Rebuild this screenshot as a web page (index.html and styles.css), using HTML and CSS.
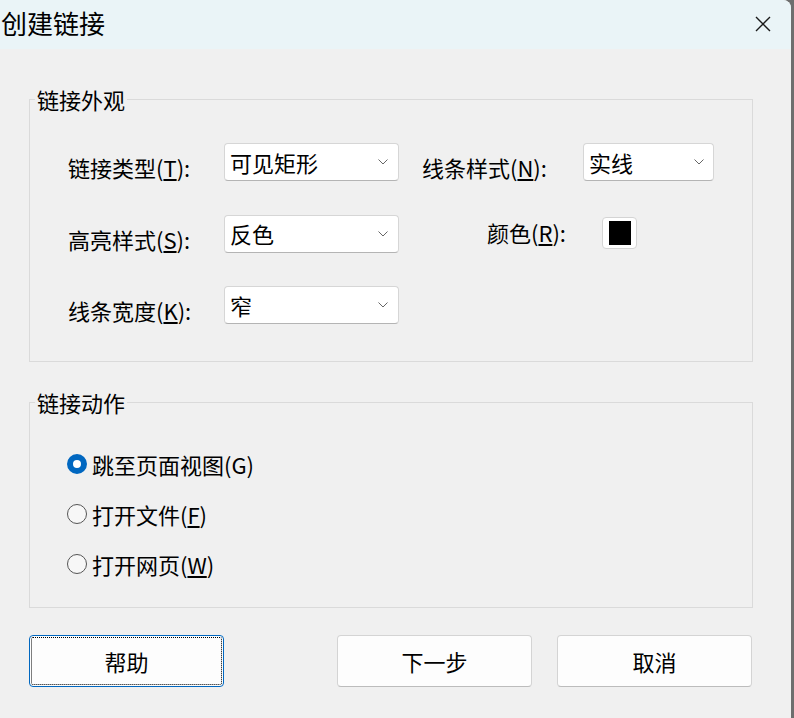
FILE: index.html
```html
<!DOCTYPE html>
<html lang="zh-CN">
<head>
    <meta charset="UTF-8">
    <title>创建链接</title>
    <link rel="stylesheet" href="styles.css">
</head>
<body>
    <div class="window">
        <div class="titlebar">
            <span class="title">创建链接</span>
            <svg class="close" width="16" height="16" viewBox="0 0 16 16">
                <path d="M1 1 L15 15 M15 1 L1 15" stroke="#1a1a1a" stroke-width="1.4" fill="none"/>
            </svg>
        </div>

        <fieldset class="group look">
            <legend>链接外观</legend>
            <div class="look-grid">
                <div class="label">链接类型(<u>T</u>):</div>
                <div class="select">
                    <span>可见矩形</span>
                    <svg width="10" height="6" viewBox="0 0 10 6"><path d="M0.5 0.5 L5 5 L9.5 0.5" stroke="#666" fill="none"/></svg>
                </div>
                <div class="label label-mid">线条样式(<u>N</u>):</div>
                <div class="select select-small">
                    <span>实线</span>
                    <svg width="10" height="6" viewBox="0 0 10 6"><path d="M0.5 0.5 L5 5 L9.5 0.5" stroke="#666" fill="none"/></svg>
                </div>

                <div class="label">高亮样式(<u>S</u>):</div>
                <div class="select">
                    <span>反色</span>
                    <svg width="10" height="6" viewBox="0 0 10 6"><path d="M0.5 0.5 L5 5 L9.5 0.5" stroke="#666" fill="none"/></svg>
                </div>
                <div class="label label-color">颜色(<u>R</u>):</div>
                <div class="swatch"><div class="swatch-fill"></div></div>

                <div class="label">线条宽度(<u>K</u>):</div>
                <div class="select">
                    <span>窄</span>
                    <svg width="10" height="6" viewBox="0 0 10 6"><path d="M0.5 0.5 L5 5 L9.5 0.5" stroke="#666" fill="none"/></svg>
                </div>
            </div>
        </fieldset>

        <fieldset class="group action">
            <legend>链接动作</legend>
            <div class="radios">
                <div class="radio-row"><span class="radio checked"></span>跳至页面视图(G)</div>
                <div class="radio-row"><span class="radio"></span>打开文件(<u>F</u>)</div>
                <div class="radio-row"><span class="radio"></span>打开网页(<u>W</u>)</div>
            </div>
        </fieldset>

        <div class="buttons">
            <div class="btn btn-help focused">帮助</div>
            <div class="btn btn-next">下一步</div>
            <div class="btn btn-cancel">取消</div>
        </div>
    </div>
</body>
</html>
```

FILE: styles.css
```css
body {
    margin: 0;
    background: #6e6e6e;
    font-family: "Noto Sans CJK SC", "Microsoft YaHei", sans-serif;
    color: #000;
    overflow: hidden;
}

.window {
    width: 791px;
    height: 718px;
    background: #f0f0f0;
    border-top-right-radius: 8px;
    overflow: hidden;
}

.titlebar {
    height: 49px;
    background: #eaf4f7;
    display: flex;
    align-items: center;
    justify-content: space-between;
}

.title {
    font-size: 26px;
    line-height: 34px;
    margin-left: 1px;
    margin-top: -4px;
}

.close {
    margin-right: 20px;
    margin-top: -2px;
}

.group {
    box-sizing: border-box;
    width: 724px;
    margin: 0 0 0 29px;
    padding: 0;
    border: 1px solid #dadada;
    min-width: 0;
}

.group legend {
    font-size: 22px;
    line-height: 28px;
    padding: 0 2px;
    margin-left: 5px;
}

.look {
    margin-top: 36px;
}

.action {
    margin-top: 26px;
}

.look-grid {
    display: grid;
    grid-template-columns: 156px 175px 184px 131px;
    grid-auto-rows: 38px;
    row-gap: 33.5px;
    padding: 30px 0 37px 38px;
}

.label {
    font-size: 22px;
    line-height: 28px;
    padding-top: 10px;
    white-space: nowrap;
}

.label-mid {
    padding-left: 23px;
}

.label-color {
    padding-top: 3px;
    padding-right: 17px;
    text-align: right;
}

.select {
    box-sizing: border-box;
    height: 38px;
    background: #fff;
    border: 1px solid #d6d6d6;
    border-bottom-color: #b4b4b4;
    border-radius: 4px;
    display: flex;
    align-items: center;
    justify-content: space-between;
    padding: 0 10px 0 5px;
    font-size: 22px;
    line-height: 28px;
}

.select span {
    margin-top: -1px;
}

.select-small {
    padding-right: 9px;
}

.swatch {
    box-sizing: border-box;
    width: 35px;
    height: 32px;
    margin: 2px 0 0 19px;
    background: #fff;
    border: 1px solid #d4d4d4;
    border-radius: 4px;
    padding: 3px 5px 3px 6px;
}

.swatch-fill {
    width: 100%;
    height: 100%;
    background: #000;
}

.radios {
    padding: 23px 0 18px 37px;
}

.radio-row {
    height: 50px;
    display: flex;
    align-items: center;
    font-size: 22px;
    line-height: 28px;
}

.radio {
    box-sizing: border-box;
    width: 20px;
    height: 20px;
    border-radius: 50%;
    border: 1px solid #555;
    background: #f7f7f7;
    margin-right: 5px;
    flex-shrink: 0;
}

.radio.checked {
    border: 6px solid #0067c0;
    background: #fff;
}

.buttons {
    display: flex;
    margin-top: 27px;
}

.btn {
    box-sizing: border-box;
    width: 195px;
    height: 52px;
    background: #fdfdfd;
    border: 1px solid #d4d4d4;
    border-bottom-color: #bcbcbc;
    border-radius: 4px;
    display: flex;
    align-items: center;
    justify-content: center;
    font-size: 22px;
    line-height: 28px;
}

.btn-help {
    margin-left: 29px;
}

.btn-next {
    margin-left: 113px;
}

.btn-cancel {
    margin-left: 25px;
}

.focused {
    border: 1px solid #0067c0;
    outline: 1px dotted #000;
    outline-offset: -3px;
}
```
